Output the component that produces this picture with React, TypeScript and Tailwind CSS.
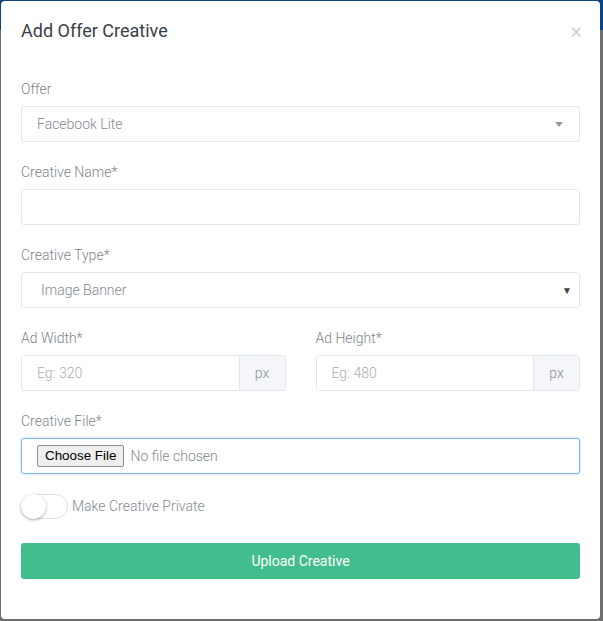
import { useState } from "react";

// Champ de formulaire avec libelle au-dessus.
function Field({ label, children }: { label: string; children: React.ReactNode }) {
  return (
    <div className="mb-[20px]">
      <label className="mb-[6px] block h-[21px] text-[14px] leading-[21px] text-[#7d848e]">{label}</label>
      {children}
    </div>
  );
}

function AddonInput({ placeholder }: { placeholder: string }) {
  return (
    <div className="flex h-[36px] rounded-[3px] border border-[#e4e7eb]">
      <input
        type="text"
        placeholder={placeholder}
        className="min-w-0 flex-1 bg-white px-[15px] text-[14px] font-light text-[#495057] outline-none placeholder:text-[#a7adb5]"
      />
      <span className="flex w-[46px] items-center justify-center border-l border-[#e4e7eb] bg-[#f4f6f9] text-[14px] text-[#8a9099]">
        px
      </span>
    </div>
  );
}

export default function App() {
  const [isPrivate, setIsPrivate] = useState(false);

  return (
    <div
      className="h-[621px] w-[603px] bg-[linear-gradient(#0b4383_30px,#6e6e6e_30px)] pl-[1px] pt-[1px] font-light"
      style={{ fontFamily: "Roboto, 'Liberation Sans', sans-serif" }}
    >
      <div className="h-[618px] w-[599px] rounded-[4px] bg-white">
        {/* En-tete */}
        <div className="flex items-center justify-between px-[20px] pb-[16px] pt-[16px]">
          <h4 className="text-[18px] font-normal leading-[27px] text-[#3a4048]">Add Offer Creative</h4>
          <button type="button" className="mr-[-2px] text-[22px] leading-[27px] text-[#c8c8c8]">
            ×
          </button>
        </div>

        {/* Corps */}
        <div className="px-[20px] pt-[19px]">
          <Field label="Offer">
            <div className="flex h-[36px] items-center justify-between rounded-[3px] border border-[#e4e7eb] px-[15px]">
              <span className="text-[14px] text-[#848a93]">Facebook Lite</span>
              <span className="mr-[1px] h-0 w-0 border-x-[4px] border-t-[5px] border-x-transparent border-t-[#9a9a9a]" />
            </div>
          </Field>

          <Field label="Creative Name*">
            <input
              type="text"
              className="block h-[36px] w-full rounded-[3px] border border-[#e4e7eb] px-[15px] text-[14px] outline-none"
            />
          </Field>

          <Field label="Creative Type*">
            <div className="flex h-[36px] items-center justify-between rounded-[3px] border border-[#e4e7eb] pl-[19px] pr-[7px]">
              <span className="text-[14px] text-[#848a93]">Image Banner</span>
              <span className="text-[10px] text-[#444]">▼</span>
            </div>
          </Field>

          <div className="grid grid-cols-2 gap-[30px]">
            <Field label="Ad Width*">
              <AddonInput placeholder="Eg: 320" />
            </Field>
            <Field label="Ad Height*">
              <AddonInput placeholder="Eg: 480" />
            </Field>
          </div>

          <Field label="Creative File*">
            <div className="flex h-[36px] items-center rounded-[3px] border border-[#80b6f5] pl-[15px] shadow-[0_0_0_1px_rgba(128,182,245,0.25)]">
              <span
                className="flex h-[22px] items-center rounded-[2px] border border-[#8f8f8f] bg-[#efefef] px-[7px] text-[13.4px] font-normal text-black"
                style={{ fontFamily: "'Liberation Sans', Arial, sans-serif" }}
              >
                Choose File
              </span>
              <span className="ml-[6px] text-[14px] text-[#848a93]">No file chosen</span>
            </div>
          </Field>

          {/* Interrupteur */}
          <div className="mt-[20px] flex items-center">
            <button
              type="button"
              onClick={() => setIsPrivate(!isPrivate)}
              className="relative h-[25px] w-[47px] rounded-full border border-[#dfdfdf] bg-white"
            >
              <span className="absolute left-[-1px] top-[-1px] h-[25px] w-[25px] rounded-full bg-white shadow-[0_1px_3px_rgba(0,0,0,0.35)]" />
            </button>
            <span className="ml-[4px] text-[14px] text-[#848a93]">Make Creative Private</span>
          </div>

          <button
            type="button"
            className="mt-[24px] flex h-[36px] w-full items-center justify-center rounded-[3px] bg-[#42bd8e] text-[14px] font-normal text-white"
          >
            Upload Creative
          </button>
        </div>
      </div>
    </div>
  );
}
